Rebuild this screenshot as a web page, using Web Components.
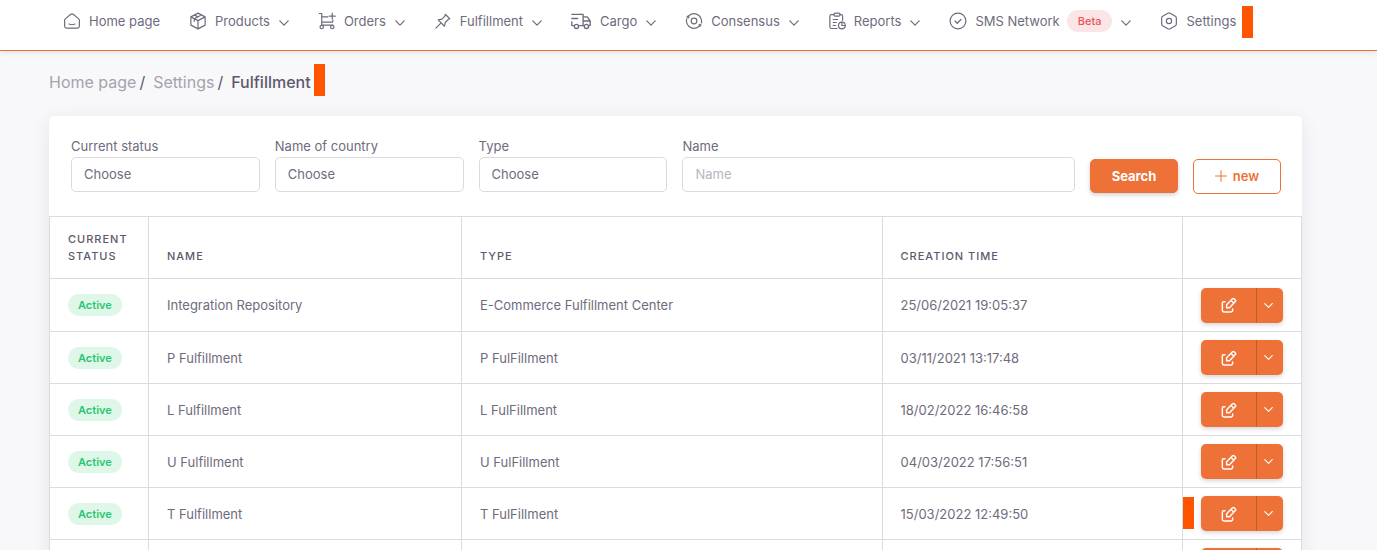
<!DOCTYPE html>
<html lang="en">
<head>
<meta charset="utf-8">
<title>Fulfillment settings</title>
<style>
  :root {
    --orange: #ee7137;
    --text: #6f6b7d;
    --heading: #5d596c;
    --muted: #a5a3ae;
    --line: #dbdade;
  }
  body {
    margin: 0;
    background: #f8f7fa;
    color: var(--text);
    font: 13px/20px Inter, "Liberation Sans", sans-serif;
  }
</style>
</head>
<body>
<fulfillment-app></fulfillment-app>
<script>
const define = (name, html, setup) => {
  const template = document.createElement('template');
  template.innerHTML = html;
  customElements.define(name, class extends HTMLElement {
    connectedCallback() {
      if (this.shadowRoot) return;
      const root = this.attachShadow({ mode: 'open' });
      root.append(template.content.cloneNode(true));
      if (setup) setup(this, root);
    }
  });
};

const icons = {
  home: '<path d="M3 9.2 10 3.3q2-1.5 4 0l7 5.9q.8.8.8 2V19q0 2.500-2.500 2.500H4.700Q2.200 21.500 2.200 19v-7.800q0-1.200.8-2z"/><path d="M8 16q4 2 8 0"/>',
  box: '<path d="M12 1.500 21.500 6.500v11L12 22.500l-9.500-5v-11zM2.500 6.500l9.500 5 9.500-5M12 11.500v11M7 9l9.500-5M7 9v3.500M7.500 4.200 12 6.500"/>',
  cart: '<path d="M1.500 2H5v15M5 17.500h15M5 13.500h14.500l.5-2.500M5 6.500h8M19 1.500v8M15 5.500h8"/><circle cx="5" cy="20" r="2.300"/><circle cx="19" cy="20" r="2.300"/>',
  pin: '<path d="m15 3 6 6-2 1-4 4-1 5-8.500-8.500 5-1 4-4zM8.500 15.500 2.500 21.500"/>',
  truck: '<path d="M1 4h13.500v13.500H10M14.500 7h5l3.500 5v5.500h-2M1 9h7M1 13v4.500h2M14.500 12H23M14.500 17.500H16"/><circle cx="6.500" cy="18.500" r="2.500"/><circle cx="18.500" cy="18.500" r="2.500"/>',
  orbit: '<circle cx="12" cy="12" r="3.800"/><path d="M5 5q7-5.500 14 0 2.500 2.500 3 6M2 13q.5 3.500 3 6 7 5.500 14 0M2 9.500v3M22 11.500v3"/><circle cx="4" cy="6.500" r="1.200"/><circle cx="20" cy="17.500" r="1.200"/>',
  report: '<path d="M8 3.500H4.500Q2.500 3.500 2.500 6v13.500Q2.500 22 5 22h7M16 3.500h1.500q2 0 2 2.500v5"/><rect x="8" y="1.500" width="8" height="4" rx="1.500"/><path d="M7 10h6M7 14h4M7 18h3"/><circle cx="18.500" cy="18" r="4.500"/><path d="M18.500 13.500V18H23"/>',
  check: '<circle cx="12" cy="12" r="10.500"/><path d="m8 12 3 3 5-5"/>',
  hex: '<path d="M12 1.200q.8 0 1.500.4l7 4Q21.800 6.500 21.800 8v8q0 1.500-1.300 2.400l-7 4q-1.500.8-3 0l-7-4Q2.200 17.500 2.200 16V8q0-1.500 1.300-2.400l7-4Q11.200 1.200 12 1.200z"/><circle cx="12" cy="12" r="3.500"/>',
  chevron: '<path d="m2 7 10 10L22 7"/>',
  plus: '<path d="M12 1v22M1 12h22"/>',
  edit: '<path d="M6 7H4Q2 7 2 9v11q0 2.500 2.500 2.500H15q2.500 0 2.500-2.500v-2M8.500 16v-4.500l8.800-8.800q1.200-1.200 2.400 0l1.800 1.800q1.200 1.200 0 2.400L12.800 16zM15.500 5.500l3.500 3.500"/>'
};

define('app-icon', `
  <style>
    :host { display: inline-flex; flex: none; width: 18px; height: 18px; }
    svg { width: 100%; height: 100%; fill: none; stroke: currentColor; stroke-linecap: round; stroke-linejoin: round; }
  </style>
  <svg viewBox="0 0 24 24" aria-hidden="true"></svg>`,
  (el, root) => {
    const svg = root.querySelector('svg');
    svg.innerHTML = icons[el.getAttribute('name')];
    svg.setAttribute('stroke-width', el.getAttribute('weight') || 1.6);
  });

define('text-marker', `
  <style>:host { display: block; flex: none; width: 11px; height: 32px; background: #ff5500; }</style>`);

define('pill-badge', `
  <style>
    :host { display: inline-block; box-sizing: border-box; height: 22px; padding: 0 10px; border-radius: 11px;
      font-size: 11px; line-height: 22px; font-weight: 600; color: #28c76f; background: #dff7e9; vertical-align: middle; }
    :host([tone="danger"]) { padding: 0 11px; color: #ea5455; background: #fce5e6; font-weight: 500; }
  </style><slot></slot>`);

define('nav-item', `
  <style>
    :host { display: block; }
    a { display: flex; align-items: center; height: 42px; color: inherit; text-decoration: none; white-space: nowrap; }
    .icon { margin-right: 8px; }
    .icon[name="truck"] { width: 20px; height: 20px; margin-right: 9px; }
    .chevron { width: 10px; height: 10px; margin-left: 9px; margin-top: 3px; }
  </style>
  <a href="#"><slot></slot></a>`,
  (el, root) => {
    const link = root.querySelector('a');
    link.insertAdjacentHTML('afterbegin', `<app-icon class="icon" name="${el.getAttribute('icon')}"></app-icon>`);
    if (el.hasAttribute('menu')) link.insertAdjacentHTML('beforeend', '<app-icon class="chevron" name="chevron" weight="3"></app-icon>');
  });

define('top-nav', `
  <style>
    :host { display: block; background: #fff; border-bottom: 1px solid var(--orange); box-shadow: 0 1px 6px rgba(75,70,92,.14); }
    nav { display: flex; gap: 29px; height: 50px; padding-left: 63px; }
    pill-badge { margin-left: 7px; }
    .current { display: flex; gap: 6px; }
    text-marker { margin-top: 6px; }
  </style>
  <nav aria-label="Main">
    <nav-item icon="home">Home page</nav-item>
    <nav-item icon="box" menu>Products</nav-item>
    <nav-item icon="cart" menu>Orders</nav-item>
    <nav-item icon="pin" menu>Fulfillment</nav-item>
    <nav-item icon="truck" menu>Cargo</nav-item>
    <nav-item icon="orbit" menu>Consensus</nav-item>
    <nav-item icon="report" menu>Reports</nav-item>
    <nav-item icon="check" menu>SMS Network<pill-badge tone="danger">Beta</pill-badge></nav-item>
    <div class="current"><nav-item icon="hex">Settings</nav-item><text-marker></text-marker></div>
  </nav>`);

define('bread-crumb', `
  <style>
    :host { display: block; }
    nav { display: flex; align-items: end; height: 32px; font-size: 16px; line-height: 28px; color: var(--heading); }
    a { color: var(--muted); text-decoration: none; }
    .sep { margin: 0 8px 0 3px; }
    .here { font-weight: 500; margin-right: 3px; }
  </style>
  <nav aria-label="Breadcrumb">
    <a href="#">Home page</a><span class="sep">/</span><a href="#">Settings</a><span class="sep">/</span><span class="here">Fulfillment</span><text-marker></text-marker>
  </nav>`);

define('filter-field', `
  <style>
    :host { display: block; min-width: 0; }
    label { display: block; height: 19px; line-height: 17px; }
    select, input { display: block; box-sizing: border-box; width: 100%; height: 35px; margin: 0; padding: 0 12px 2px;
      border: 1px solid var(--line); border-radius: 5px; background: #fff; color: var(--text); font: inherit; appearance: none; }
    input::placeholder { color: #b7b5be; opacity: 1; }
  </style>
  <label for="control"></label>`,
  (el, root) => {
    const label = root.querySelector('label');
    label.textContent = el.getAttribute('label');
    label.insertAdjacentHTML('afterend', el.hasAttribute('text')
      ? `<input id="control" type="text" placeholder="${el.getAttribute('label')}">`
      : '<select id="control"><option>Choose</option></select>');
  });

define('action-button', `
  <style>
    :host { display: block; }
    button { display: flex; align-items: center; justify-content: center; gap: 6px; box-sizing: border-box; width: 100%; height: 35px; padding: 0 0 1px;
      border: 1px solid var(--orange); border-radius: 5px; background: #fff; color: var(--orange); font: inherit; font-weight: 600; }
    :host([primary]) button { height: 34px; background: var(--orange); color: #fff; font-weight: 700; box-shadow: 0 2px 4px rgba(75,70,92,.25); }
  </style>
  <button type="button"><slot></slot></button>`);

define('filter-bar', `
  <style>
    :host { display: block; }
    form { display: grid; grid-template-columns: 189fr 189fr 189fr 393fr 88px 88px; gap: 15px; height: 56px; padding: 22px 21px 22px 22px; }
    action-button { margin-top: 21px; }
    app-icon { width: 12px; height: 12px; }
  </style>
  <form>
    <filter-field label="Current status"></filter-field>
    <filter-field label="Name of country"></filter-field>
    <filter-field label="Type"></filter-field>
    <filter-field label="Name" text></filter-field>
    <action-button primary>Search</action-button>
    <action-button><app-icon name="plus" weight="2"></app-icon>new</action-button>
  </form>`);

define('row-actions', `
  <style>
    :host { display: flex; width: 82px; height: 35px; border-radius: 5px; box-shadow: 0 2px 4px rgba(75,70,92,.22); }
    button { display: flex; align-items: center; justify-content: center; box-sizing: border-box; height: 35px; padding: 0; border: 0; background: var(--orange); color: #fff; }
    .edit { flex: 1; border-radius: 5px 0 0 5px; }
    .more { width: 27px; padding-right: 3px; border-left: 1px solid #bf5c2f; border-radius: 0 5px 5px 0; }
    .edit app-icon { width: 16px; height: 16px; }
    .more app-icon { width: 9px; height: 9px; }
  </style>
  <button class="edit" type="button" aria-label="Edit"><app-icon name="edit" weight="2.2"></app-icon></button><button class="more" type="button" aria-label="More"><app-icon name="chevron" weight="3"></app-icon></button>`);

define('data-table', `
  <style>
    :host { display: block; }
    table { width: 100%; border-collapse: collapse; table-layout: fixed; }
    .status { width: 99px; } .name { width: 25%; } .time { width: 24%; } .actions { width: 119px; }
    th, td { border: 1px solid var(--line); padding: 0 18px; text-align: left; }
    th { height: 48px; padding-bottom: 13px; vertical-align: bottom; color: var(--heading); font-size: 11px; line-height: 17px; font-weight: 500; letter-spacing: 1px; }
    td { position: relative; height: 51px; }
    tbody tr:first-child td { height: 52px; }
    text-marker { position: absolute; left: 0; top: 9px; }
  </style>
  <table>
    <colgroup><col class="status"><col class="name"><col><col class="time"><col class="actions"></colgroup>
    <thead><tr><th>CURRENT STATUS</th><th>NAME</th><th>TYPE</th><th>CREATION TIME</th><td></td></tr></thead>
    <tbody></tbody>
  </table>`,
  (el, root) => {
    const rows = [
      ['Integration Repository', 'E-Commerce Fulfillment Center', '25/06/2021 19:05:37'],
      ['P Fulfillment', 'P FulFillment', '03/11/2021 13:17:48'],
      ['L Fulfillment', 'L FulFillment', '18/02/2022 16:46:58'],
      ['U Fulfillment', 'U FulFillment', '04/03/2022 17:56:51'],
      ['T Fulfillment', 'T FulFillment', '15/03/2022 12:49:50', true],
      ['', '', '']
    ];
    root.querySelector('tbody').innerHTML = rows.map(([name, type, time, marked]) => `
      <tr><td>${name && '<pill-badge>Active</pill-badge>'}</td><td>${name}</td><td>${type}</td><td>${time}</td>
      <td>${marked ? '<text-marker></text-marker>' : ''}<row-actions></row-actions></td></tr>`).join('');
  });

define('content-card', `
  <style>
    :host { display: block; background: #fff; border-radius: 5px; box-shadow: 0 4px 18px rgba(75,70,92,.1); }
  </style><slot></slot>`);

define('fulfillment-app', `
  <style>
    :host { display: block; height: 100vh; overflow: hidden; }
    main { padding: 13px 75px 24px 49px; }
    content-card { margin-top: 20px; }
  </style>
  <top-nav></top-nav>
  <main>
    <bread-crumb></bread-crumb>
    <content-card>
      <filter-bar></filter-bar>
      <data-table></data-table>
    </content-card>
  </main>`);
</script>
</body>
</html>
